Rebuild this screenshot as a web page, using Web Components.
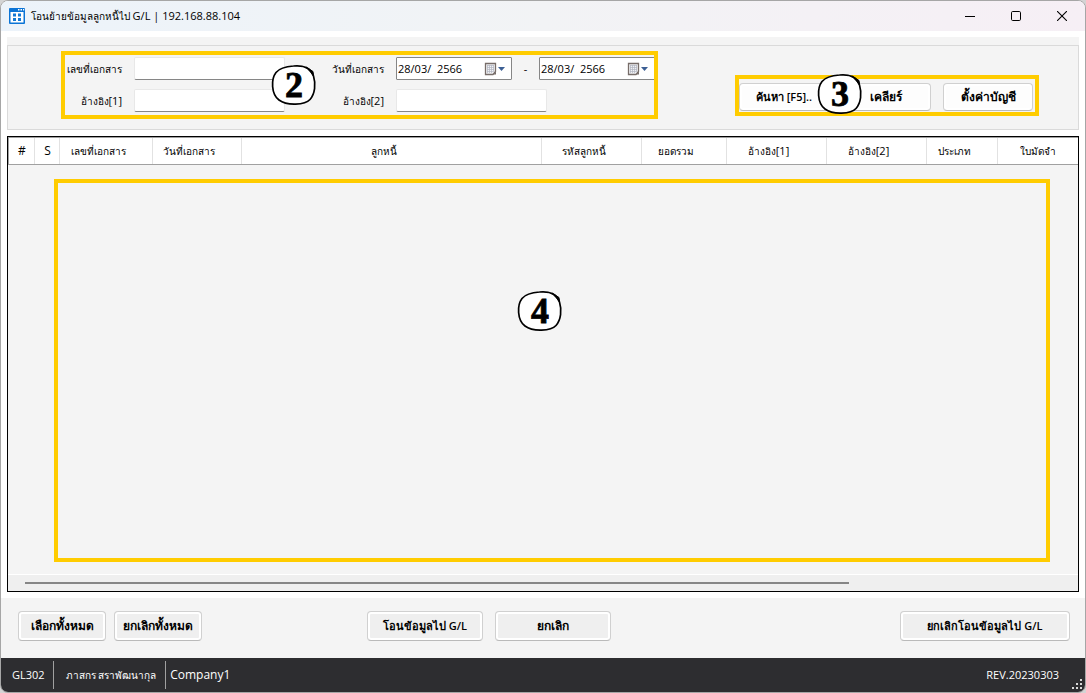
<!DOCTYPE html>
<html lang="th">
<head>
<meta charset="utf-8">
<meta name="viewport" content="width=device-width, initial-scale=1">
<title>โอนย้ายข้อมูลลูกหนี้ไป G/L</title>
<style>
html,body{margin:0;height:100%}
body{background:#d4d4d4;color:#000;font:11px/16px "Open Sans","Noto Sans",sans-serif}
</style>
</head>
<body>
<gl-window></gl-window>
<script>
const define=(name,html,setup)=>customElements.define(name,class extends HTMLElement{
  constructor(){
    super();
    const t=document.createElement('template');
    t.innerHTML=html;
    this.attachShadow({mode:'open'}).append(t.content.cloneNode(true));
  }
  connectedCallback(){ if(setup) setup(this,this.shadowRoot); }
});

define('gl-titlebar',`
<style>
:host{display:flex;align-items:center;height:30px;padding-left:8px;background:linear-gradient(90deg,#ecf3fa,#f2f3f5 50%,#f6eff5)}
.app{margin-right:6px}
h1{flex:1;margin:0;font-size:10px;font-weight:400;line-height:16px}
button{display:flex;align-items:center;justify-content:center;width:46px;height:30px;padding:0;border:0;background:none}
</style>
<svg class="app" width="16" height="16" viewBox="0 0 16 16"><rect width="16" height="16" rx="1" fill="#0b74d6"/><rect x="1.500" y="4" width="13" height="10.500" fill="#fff"/><path d="M9 1h1.500v1.500H9zM11.500 1H13v1.500h-1.500zM14 1h1.200v1.500H14z" fill="#fff"/><path d="M4 5.500h3v3H4zM9 5.500h3v3H9zM4 10h3v3H4zM9 10h3v3H9z" fill="#1479d4"/></svg>
<h1><slot></slot></h1>
<button aria-label="Minimize"><svg width="10" height="10"><path d="M0 5.500h10" stroke="#000"/></svg></button>
<button aria-label="Maximize"><svg width="10" height="10"><rect x=".5" y=".5" width="9" height="9" rx="1.200" fill="none" stroke="#000"/></svg></button>
<button aria-label="Close"><svg width="10" height="10"><path d="M0 0l10 10M10 0L0 10" stroke="#000" stroke-width="1.100"/></svg></button>`);

define('gl-mark',`
<style>
:host{position:absolute;width:46px;height:42px}
svg{display:block}
text{font:bold 36px "Liberation Serif",serif;stroke:#000;stroke-width:.8px}
</style>
<svg width="46" height="42" viewBox="0 0 46 42"><path d="M22.500 2C32 1 40 4 42.500 12C45 20 44 30 39 35.500C34 41 16 42 8 36C0 30 0 15 5 8.500C9 3.500 15 2.500 22.500 2Z" fill="#fff" stroke="#000" stroke-width="1.700"/><path d="M35 3L42 7.500L42.500 12L39.500 8Z" stroke="#000" stroke-width="1"/><text x="23" y="33" text-anchor="middle"></text></svg>`,
(h,r)=>{ r.querySelector('text').textContent=h.getAttribute('value'); });

define('gl-button',`
<style>
:host{display:block;width:90px}
button{box-sizing:border-box;width:100%;height:30px;padding:0;border:1px solid #d0d0d0;border-bottom-color:#bababa;border-radius:4px;background:#efefef;box-shadow:inset 0 0 0 2px #fff;color:#000;font:600 11px/16px "Open Sans","Noto Sans",sans-serif;white-space:nowrap}
:host([light]) button{height:28px;background:#fdfdfd}
:host([wide]) button{font-size:12px}
</style>
<button type="button"><slot></slot></button>`);

define('gl-text',`
<style>
:host{display:contents}
label{text-align:right;white-space:nowrap;font-size:10px}
input{box-sizing:border-box;width:151px;height:23px;padding:0 4px;border:1px solid #e8e8e8;border-bottom-color:#868686;border-radius:2px;background:#fff;font:inherit}
</style>
<label for="f"><slot></slot></label><input id="f" type="text">`);

define('gl-date',`
<style>
:host{display:flex;flex:none;box-sizing:border-box;align-items:center;width:116px;height:23px;padding:0 5px 0 1px;border:1px solid #868686;border-radius:1px;background:#fff}
input{flex:1;min-width:0;padding:0;border:0;background:none;color:#000;font:inherit;white-space:pre}
svg{flex:none}
</style>
<input type="text">
<svg width="22" height="14" viewBox="0 0 22 14"><path d="M1.500 1.500h10v8l-2.500 3H1.500z" fill="#f1f2f5" stroke="#776d69" stroke-width="1.300"/><path d="M3 3.500h7M3 5.500h7M3 7.500h7M3 9.500h6M3.500 3v8M5.500 3v8M7.500 3v8M9.500 3v7" stroke="#b2b6c2" stroke-width=".7"/><path d="M12 9.500v3H9z" fill="#776d69"/><path d="M14 5h7l-3.500 4z" fill="#3c5f94"/></svg>`,
(h,r)=>{ const i=r.querySelector('input'); i.value=h.getAttribute('value'); i.setAttribute('aria-label',h.getAttribute('label')); });

define('gl-filter',`
<style>
:host{display:flex;box-sizing:border-box;height:93px;padding-top:8px;background:#f4f4f4}
section{flex:1;display:flex;justify-content:space-between;align-items:flex-start;border:1px solid #dadada;padding:5px 39px 0 53px}
.frame{position:relative;box-sizing:border-box;border:4px solid #fc0}
.fields{display:flex;gap:42px;width:597px;height:68px;padding:2px 0 0 1px}
.grid{display:grid;grid-template-columns:56px auto;gap:9px 12px;align-content:start;align-items:center}
.dates{display:flex;gap:11px;align-items:center}
.dates span{width:5px;text-align:center}
.right{flex:1;min-width:0;grid-template-columns:57px 1fr;overflow:hidden}
.cap{text-align:right;white-space:nowrap;font-size:10px}
.latin{font-size:11px}
.actions{display:flex;gap:12px;height:41px;margin-top:24px;padding:4px 2px 0 0}
.two{left:206px;top:9px}
.three{left:78px;top:-6px}
</style>
<section>
<div class="frame fields">
  <div class="grid"><gl-text>เลขที่เอกสาร</gl-text><gl-text>อ้างอิง<span class="latin">[1]</span></gl-text></div>
  <div class="grid right"><div class="cap">วันที่เอกสาร</div><div class="dates"><gl-date value="28/03/  2566" label="วันที่เอกสาร"></gl-date><span>-</span><gl-date value="28/03/  2566" label="วันที่เอกสาร"></gl-date></div><gl-text>อ้างอิง<span class="latin">[2]</span></gl-text></div>
  <gl-mark class="two" value="2"></gl-mark>
</div>
<div class="frame actions">
  <gl-button light>ค้นหา [F5]..</gl-button><gl-button light wide>เคลียร์</gl-button><gl-button light wide>ตั้งค่าบัญชี</gl-button>
  <gl-mark class="three" value="3"></gl-mark>
</div>
</section>`);

define('gl-grid',`
<style>
:host{flex:1;min-height:0;display:flex;flex-direction:column;border:1px solid #000;background:#f4f4f4}
table{width:100%;table-layout:fixed;border-collapse:separate;border-spacing:0;background:#fff;border:1px solid #a0a0a0;border-right:0;box-sizing:border-box}
th{box-sizing:border-box;height:26px;padding:0 16px 0 0;border-right:1px solid #e2e2e2;font-size:10px;font-weight:400;text-align:center;white-space:nowrap}
th.s{padding:0 0 0 1px;font-size:12px}th:last-child{border:0;padding:0}
.latin{font-size:11px}
.body{position:relative;flex:1;margin:14px 28px 12px 46px;border:4px solid #fc0}
gl-mark{left:459px;top:107px}
.scroll{height:16px;border-top:1px solid #fff;background:#efefef}
.thumb{width:77%;height:2px;margin:7px 0 0 17px;background:#868686}
</style>
<table><colgroup><col style="width:26px"><col style="width:25px"><col style="width:93px"><col style="width:89px"><col><col style="width:100px"><col style="width:85px"><col style="width:100px"><col style="width:100px"><col style="width:71px"><col style="width:80px"></colgroup>
<thead><tr><th class="s">#</th><th class="s">S</th><th>เลขที่เอกสาร</th><th>วันที่เอกสาร</th><th>ลูกหนี้</th><th>รหัสลูกหนี้</th><th>ยอดรวม</th><th>อ้างอิง<span class="latin">[1]</span></th><th>อ้างอิง<span class="latin">[2]</span></th><th>ประเภท</th><th>ใบมัดจำ</th></tr></thead></table>
<div class="body"><gl-mark value="4"></gl-mark></div>
<div class="scroll"><div class="thumb"></div></div>`);

define('gl-actions',`
<style>
:host{display:flex;align-items:flex-start;box-sizing:border-box;height:60px;padding:13px 15px 0 17px;background:#f4f4f4}
.s{width:88px;margin-right:8px}
.m{width:116px;margin-right:12px}
.first{margin-left:157px}
.l{width:170px;margin-left:auto}
</style>
<gl-button wide class="s">เลือกทั้งหมด</gl-button><gl-button wide class="s">ยกเลิกทั้งหมด</gl-button>
<gl-button class="m first">โอนข้อมูลไป G/L</gl-button><gl-button wide class="m">ยกเลิก</gl-button>
<gl-button class="l">ยกเลิกโอนข้อมูลไป G/L</gl-button>`);

define('gl-status',`
<style>
:host{position:relative;display:flex;align-items:center;height:34px;padding-left:11px;background:#2d2d30;color:#fff}
span{line-height:28px;padding-right:8px;border-right:1px solid #a0a0a0;white-space:nowrap}
.user{padding-left:12px;padding-right:9px;font-size:10px}.co{padding-left:4px;border:0;font-size:12px}
.rev{margin-left:auto;padding-right:26px;border:0}
svg{position:absolute;right:2px;bottom:2px}
</style>
<span>GL302</span><span class="user">ภาสกร สราพัฒนากุล</span><span class="co">Company1</span><span class="rev">REV.20230303</span>
<svg width="11" height="11" fill="#d8d8d8"><path d="M8 0h2v2H8zM4 4h2v2H4zM8 4h2v2H8zM0 8h2v2H0zM4 8h2v2H4zM8 8h2v2H8z"/></svg>`);

define('gl-window',`
<style>
:host{display:flex;flex-direction:column;box-sizing:border-box;height:100%;min-height:480px;border:1px solid #a6a6a6;border-radius:8px;background:#fff;overflow:hidden}
gl-filter{margin:6px}
gl-grid{margin:0 6px 6px}
.latin{font-size:11px}
</style>
<gl-titlebar>โอนย้ายข้อมูลลูกหนี้ไป <span class="latin">G/L | 192.168.88.104</span></gl-titlebar>
<gl-filter></gl-filter>
<gl-grid></gl-grid>
<gl-actions></gl-actions>
<gl-status></gl-status>`);
</script>
</body>
</html>
